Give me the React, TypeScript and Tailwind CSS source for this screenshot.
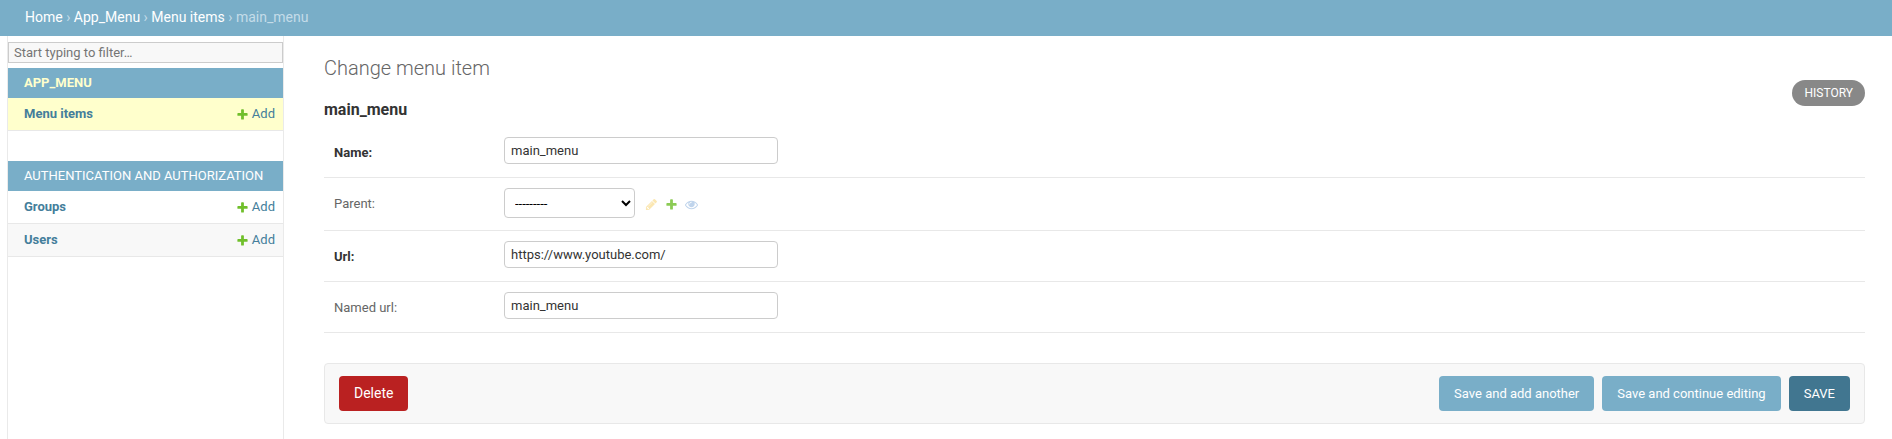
import React from "react";

const PLUS =
  "M1600 796v192q0 40-28 68t-68 28h-416v416q0 40-28 68t-68 28h-192q-40 0-68-28t-28-68v-416h-416q-40 0-68-28t-28-68v-192q0-40 28-68t68-28h416v-416q0-40 28-68t68-28h192q40 0 68 28t28 68v416h416q40 0 68 28t28 68z";
const PENCIL =
  "M491 1536l91-91-235-235-91 91v107h128v128h107zm523-928q0-22-22-22-10 0-17 7l-542 542q-7 7-7 17 0 22 22 22 10 0 17-7l542-542q7-7 7-17zm-54-192l416 416-832 832h-416v-416zm683 96q0 53-37 90l-166 166-416-416 166-165q36-38 90-38 53 0 91 38l235 234q37 39 37 91z";
const EYE =
  "M1664 960q-152-236-381-353 61 104 61 225 0 185-131.500 316.500t-316.500 131.500-316.500-131.500-131.500-316.500q0-121 61-225-229 117-381 353 133 205 333.500 326.500t434.500 121.500 434.500-121.500 333.500-326.500zm-720-384q0-20-14-34t-34-14q-125 0-214.500 89.500t-89.500 214.500q0 20 14 34t34 14 34-14 14-34q0-86 61-147t147-61q20 0 34-14t14-34zm848 384q0 34-20 69-140 230-376.500 368.500t-499.500 138.500-499.500-139-376.500-368q-20-35-20-69t20-69q140-229 376.500-368t499.500-139 499.500 139 376.500 368q20 35 20 69z";

function Icon({ path, className }: { path: string; className: string }) {
  return (
    <svg viewBox="0 0 1792 1792" fill="currentColor" aria-hidden="true" className={className}>
      <path d={path} />
    </svg>
  );
}

type Model = { name: string; row: string };

function AppModule({ title, current, models }: { title: string; current?: boolean; models: Model[] }) {
  return (
    <table className="mb-[30px] w-full border-separate border-spacing-0 text-left">
      <caption className="h-[30px] bg-[#79aec8] px-4 text-left text-[13px] leading-[30px]">
        <a href="#" className={current ? "font-bold text-[#ffffcc]" : "text-white"}>
          {title}
        </a>
      </caption>
      <tbody>
        {models.map((m) => (
          <tr key={m.name} className={m.row}>
            <th scope="row" className="h-[33px] border-b border-[#e8e8e8] pl-4 text-[13px] leading-4 font-bold text-[#447e9b]">
              <a href="#">{m.name}</a>
            </th>
            <td className="h-[33px] border-b border-[#e8e8e8] pr-2 text-[13px] leading-4 text-[#447e9b]">
              <a href="#" className="flex items-center justify-end gap-[3px]">
                <Icon path={PLUS} className="size-[13px] text-[#70bf2b]" />
                Add
              </a>
            </td>
          </tr>
        ))}
      </tbody>
    </table>
  );
}

function Row({ id, label, required, children }: { id: string; label: string; required?: boolean; children: React.ReactNode }) {
  return (
    <div className="flex min-h-[51px] items-start border-b border-[#e8e8e8] px-[10px] pt-[10px] pb-3">
      <label
        htmlFor={id}
        className={
          required
            ? "w-[170px] shrink-0 pt-2 text-[13px] leading-4 font-bold text-[#333333]"
            : "w-[170px] shrink-0 pt-2 text-[13px] leading-4 text-[#666666]"
        }
      >
        {label}
      </label>
      {children}
    </div>
  );
}

function TextField({ id, value }: { id: string; value: string }) {
  return (
    <input
      id={id}
      type="text"
      defaultValue={value}
      className="h-[27px] w-[274px] rounded border border-[#cccccc] bg-white px-[6px] text-[13px] leading-4 text-[#333333]"
    />
  );
}

export default function App() {
  return (
    <div className="flex min-h-screen flex-col bg-white font-[Roboto,sans-serif] text-[#333333]">
      <nav aria-label="Breadcrumbs" className="bg-[#79aec8] px-[25px] pt-[7px] pb-[9px] text-sm leading-5 text-[#c4dce8]">
        <a href="#" className="text-white">Home</a>
        {" › "}
        <a href="#" className="text-white">App_Menu</a>
        {" › "}
        <a href="#" className="text-white">Menu items</a>
        {" › main_menu"}
      </nav>
      <div className="flex grow">
        <nav aria-label="Sidebar" className="ml-[7px] w-[277px] shrink-0 border-x border-[#eaeaea] pt-[6px]">
          <input
            type="search"
            aria-label="Filter navigation items"
            placeholder="Start typing to filter…"
            className="mb-[5px] block h-[21px] w-full border border-[#cccccc] bg-[#f8f8f8] px-[5px] text-[13px] leading-4 placeholder:text-[#757575]"
          />
          <AppModule title="APP_MENU" current models={[{ name: "Menu items", row: "bg-[#ffffcc]" }]} />
          <AppModule
            title="AUTHENTICATION AND AUTHORIZATION"
            models={[
              { name: "Groups", row: "bg-white" },
              { name: "Users", row: "bg-[#f8f8f8]" },
            ]}
          />
        </nav>
        <main className="min-w-0 grow pt-5 pr-[27px] pl-10">
          <h1 className="text-xl leading-6 font-light text-[#666666]">Change menu item</h1>
          <div className="flex h-[47px] items-start justify-between">
            <h2 className="pt-5 text-base leading-5 font-bold">main_menu</h2>
            <a href="#" className="h-[26px] rounded-full bg-[#888888] px-3 text-xs leading-[26px] text-white">
              HISTORY
            </a>
          </div>
          <form onSubmit={(e) => e.preventDefault()}>
            <Row id="name" label="Name:" required>
              <TextField id="name" value="main_menu" />
            </Row>
            <Row id="parent" label="Parent:">
              <div className="flex items-center">
                <select
                  id="parent"
                  className="h-[30px] w-[131px] rounded border border-[#cccccc] bg-white px-[6px] text-[13px] text-black"
                >
                  <option>---------</option>
                </select>
                <span className="ml-[10px] flex gap-[7px] pt-[2px]">
                  <Icon path={PENCIL} className="size-[13px] text-[#fbe7b2]" />
                  <Icon path={PLUS} className="size-[13px] text-[#8ccb55]" />
                  <Icon path={EYE} className="size-[13px] text-[#bfd4ec]" />
                </span>
              </div>
            </Row>
            <Row id="url" label="Url:" required>
              <TextField id="url" value="https://www.youtube.com/" />
            </Row>
            <Row id="named-url" label="Named url:">
              <TextField id="named-url" value="main_menu" />
            </Row>
            <div className="mt-[30px] flex items-center gap-2 rounded border border-[#e8e8e8] bg-[#f8f8f8] px-[14px] py-3 text-[13px] text-white">
              <a href="#" className="mr-auto h-[35px] rounded bg-[#ba2121] px-[15px] text-sm leading-[35px]">
                Delete
              </a>
              <button type="submit" className="h-[35px] rounded bg-[#79aec8] px-[15px]">Save and add another</button>
              <button type="submit" className="h-[35px] rounded bg-[#79aec8] px-[15px]">Save and continue editing</button>
              <button type="submit" className="h-[35px] rounded bg-[#417690] px-[15px]">SAVE</button>
            </div>
          </form>
        </main>
      </div>
    </div>
  );
}
